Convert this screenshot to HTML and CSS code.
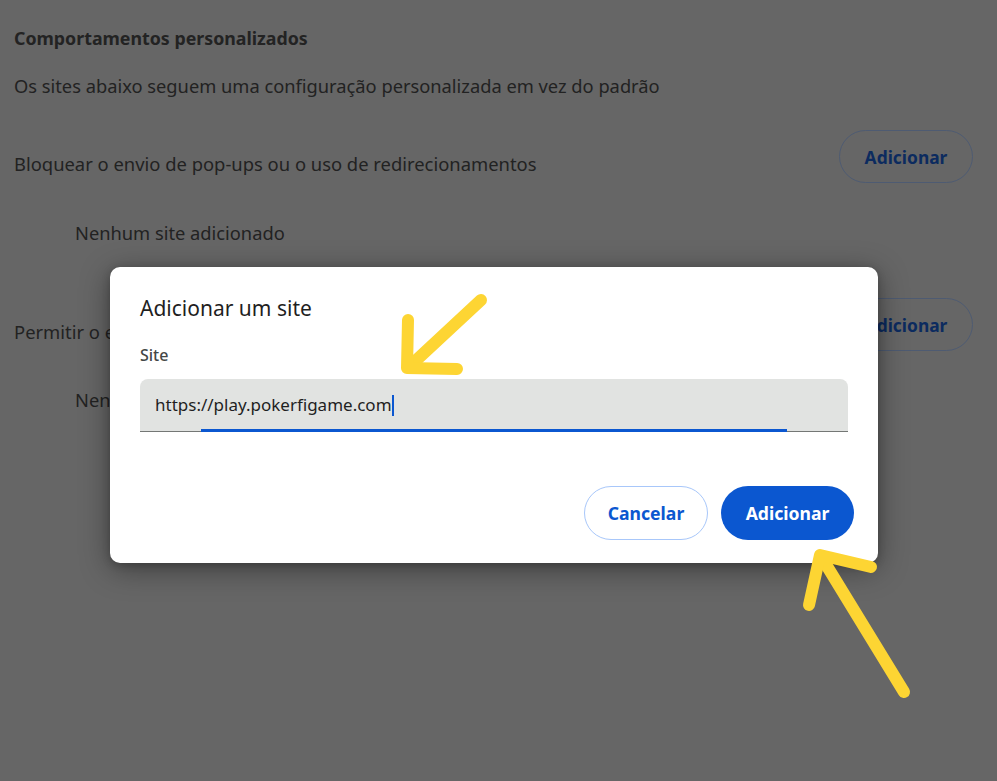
FILE: index.html
```html
<!DOCTYPE html>
<html lang="pt-BR">
<head>
<meta charset="utf-8">
<title>Adicionar um site</title>
<link rel="stylesheet" href="styles.css">
</head>
<body>
<main class="page">
  <h2 class="heading">Comportamentos personalizados</h2>
  <p class="sub">Os sites abaixo seguem uma configuração personalizada em vez do padrão</p>
  <div class="row row1">
    <span class="row-text">Bloquear o envio de pop-ups ou o uso de redirecionamentos</span>
    <button class="bg-btn">Adicionar</button>
  </div>
  <p class="empty empty1">Nenhum site adicionado</p>
  <div class="row row2">
    <span class="row-text">Permitir o envio de pop-ups e o uso de redirecionamentos</span>
    <button class="bg-btn">Adicionar</button>
  </div>
  <p class="empty empty2">Nenhum site adicionado</p>
</main>

<div class="dialog">
  <h1 class="d-title">Adicionar um site</h1>
  <div class="d-label">Site</div>
  <div class="field">
    <span class="field-text">https://play.pokerfigame.com</span><span class="caret"></span>
    <span class="focus-line"></span>
  </div>
  <div class="actions">
    <button class="btn btn-outline">Cancelar</button>
    <button class="btn btn-primary">Adicionar</button>
  </div>
</div>

<svg class="annot" width="997" height="781" viewBox="0 0 997 781">
  <g fill="none" stroke="#fdd533" stroke-width="12" stroke-linecap="round" stroke-linejoin="round">
    <path d="M481 300 L410 366"/>
    <path d="M408 320 L407 368 L457 369"/>
    <path d="M904 692 L822 558"/>
    <path d="M809 605 L820 555 L871 567"/>
  </g>
</svg>
</body>
</html>
```
FILE: styles.css
```css
html, body {
  margin: 0;
  padding: 0;
  width: 997px;
  height: 781px;
  overflow: hidden;
  background: #666666;
  font-family: "Noto Sans", "Open Sans", sans-serif;
}

.page {
  padding: 26px 24px 0 14px;
  color: #222222;
}

.heading {
  margin: 0;
  font-size: 17.8px;
  font-weight: 700;
  line-height: 24px;
  color: #232323;
}

.sub {
  margin: 24px 0 0;
  font-size: 18.3px;
  line-height: 24px;
}

.row {
  display: flex;
  justify-content: space-between;
  align-items: flex-start;
  height: 53px;
}

.row1 { margin-top: 32px; }
.row2 { margin-top: 53px; }

.row-text {
  margin-top: 22px;
  font-size: 18.4px;
  line-height: 24px;
  white-space: nowrap;
}

.bg-btn {
  box-sizing: border-box;
  width: 134px;
  height: 53px;
  border: 1px solid #4e5b72;
  border-radius: 27px;
  background: transparent;
  color: #0c2b5f;
  font-family: inherit;
  font-size: 17.4px;
  font-weight: 700;
  padding: 0;
}

.empty {
  margin: 0;
  padding-left: 61px;
  font-size: 18.3px;
  line-height: 24px;
}

.empty1 { margin-top: 38px; }
.empty2 { margin-top: 37px; }

.dialog {
  position: absolute;
  left: 110px;
  top: 267px;
  width: 768px;
  height: 296px;
  box-sizing: border-box;
  padding: 26px 24px 23px 30px;
  background: #ffffff;
  border-radius: 10px;
  box-shadow: 0 6px 30px rgba(0, 0, 0, 0.4), 0 2px 8px rgba(0, 0, 0, 0.2);
  display: flex;
  flex-direction: column;
}

.d-title {
  margin: 0;
  font-size: 21px;
  font-weight: 400;
  line-height: 30px;
  color: #1f1f1f;
}

.d-label {
  margin-top: 22px;
  font-size: 16px;
  font-weight: 500;
  line-height: 20px;
  color: #444746;
}

.field {
  position: relative;
  margin-top: 14px;
  width: 708px;
  height: 53px;
  box-sizing: border-box;
  background: #e1e3e1;
  border-radius: 8px 8px 0 0;
  border-bottom: 1px solid #747775;
  padding: 0 15px;
  display: flex;
  align-items: center;
}

.field-text {
  font-size: 17px;
  color: #1f1f1f;
  line-height: 24px;
}

.caret {
  display: inline-block;
  width: 2px;
  height: 21px;
  margin-left: 0;
  background: #0b57d0;
}

.focus-line {
  position: absolute;
  left: 61px;
  right: 61px;
  bottom: -1px;
  height: 3px;
  background: #0b57d0;
}

.actions {
  margin-top: auto;
  display: flex;
  justify-content: flex-end;
  gap: 13px;
}

.btn {
  box-sizing: border-box;
  height: 54px;
  border-radius: 27px;
  font-family: inherit;
  font-size: 17.6px;
  font-weight: 700;
  padding: 0;
}

.btn-outline {
  width: 124px;
  background: #ffffff;
  border: 1px solid #a8c7fa;
  color: #0b57d0;
}

.btn-primary {
  width: 133px;
  background: #0b57d0;
  border: none;
  color: #ffffff;
}

.annot {
  position: absolute;
  left: 0;
  top: 0;
  pointer-events: none;
}
```
